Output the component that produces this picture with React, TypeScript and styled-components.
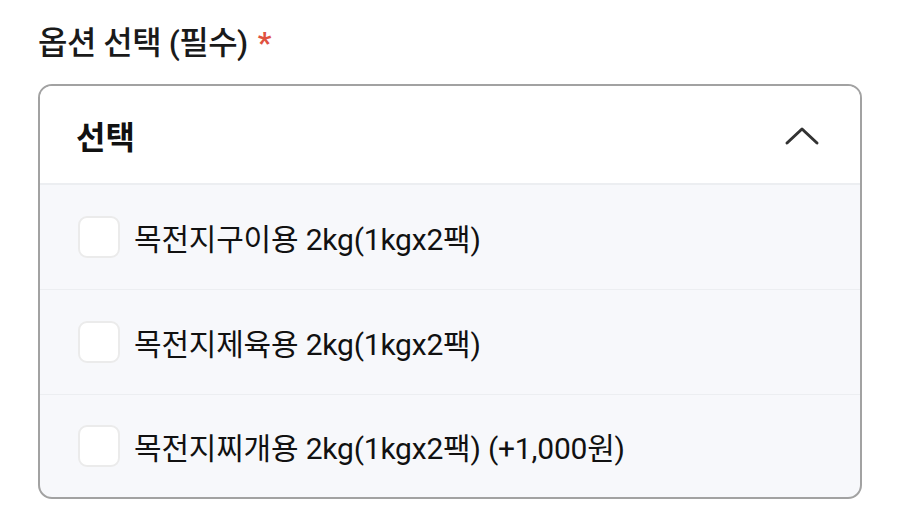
import React from "react";
import styled, { createGlobalStyle } from "styled-components";

const Global = createGlobalStyle`
  html, body { margin: 0; padding: 0; background: #ffffff; }
  body { font-family: Roboto, "Noto Sans CJK KR", sans-serif; color: #111; }
`;

const Page = styled.div`
  padding: 24px 38px 0 38px;
  width: 824px;
`;

const Label = styled.div`
  display: flex;
  align-items: center;
  gap: 10px;
  font-size: 32px;
  line-height: 38px;
  font-weight: 500;
  color: #1a1a1a;
  letter-spacing: -0.5px;
`;

const Star = styled.span`
  color: #e0523f;
  font-weight: 700;
  font-size: 30px;
`;

const Box = styled.div`
  margin-top: 22px;
  border: 2px solid #a2a2a2;
  border-radius: 14px;
  overflow: hidden;
  background: #f7f8fb;
`;

const Header = styled.div`
  height: 97px;
  background: #ffffff;
  display: flex;
  align-items: center;
  justify-content: space-between;
  padding: 0 40px 0 36px;
  border-bottom: 2px solid #eceef1;
`;

const HeaderText = styled.span`
  font-size: 32px;
  font-weight: 700;
  color: #111;
`;

const Row = styled.label<{ $last?: boolean }>`
  height: ${(p) => (p.$last ? 102 : 104)}px;
  display: flex;
  align-items: center;
  gap: 14px;
  padding-left: 38px;
  border-bottom: ${(p) => (p.$last ? "none" : "1px solid #eceef1")};
`;

const Check = styled.span`
  width: 42px;
  height: 42px;
  box-sizing: border-box;
  border: 2px solid #ebebeb;
  border-radius: 9px;
  background: #ffffff;
  flex: none;
`;

const RowText = styled.span`
  font-size: 30px;
  font-weight: 400;
  color: #111;
  letter-spacing: -0.2px;
`;

const options = [
  "목전지구이용 2kg(1kgx2팩)",
  "목전지제육용 2kg(1kgx2팩)",
  "목전지찌개용 2kg(1kgx2팩) (+1,000원)",
];

export default function App() {
  return (
    <>
      <Global />
      <Page>
        <Label>
          옵션 선택 (필수) <Star>*</Star>
        </Label>
        <Box>
          <Header>
            <HeaderText>선택</HeaderText>
            <svg width="36" height="22" viewBox="0 0 36 22" fill="none">
              <path d="M3 19 L18 5 L33 19" stroke="#333" strokeWidth="3" strokeLinecap="round" strokeLinejoin="round" />
            </svg>
          </Header>
          {options.map((o, i) => (
            <Row key={o} $last={i === options.length - 1}>
              <Check />
              <RowText>{o}</RowText>
            </Row>
          ))}
        </Box>
      </Page>
    </>
  );
}
